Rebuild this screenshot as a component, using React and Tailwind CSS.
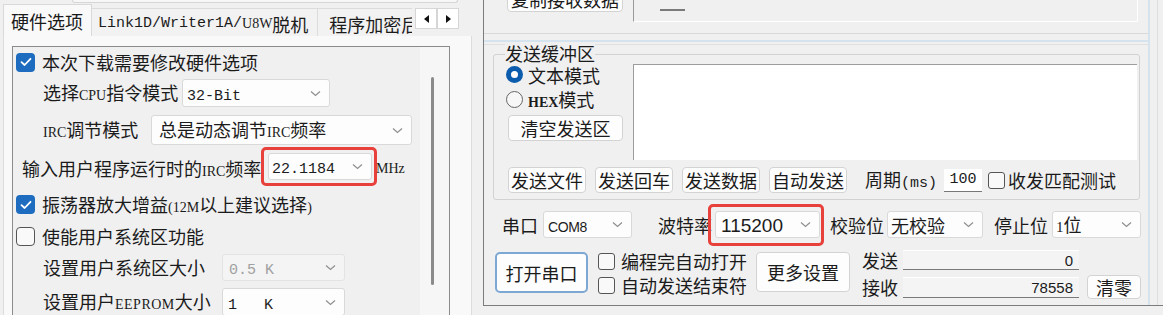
import clsx from 'clsx'

// small latin runs (serif / mono) mixed into CJK labels
function S({ children, className }) {
  return <span className={clsx("font-['Liberation_Serif',serif] text-[14px]", className)}>{children}</span>
}

function M({ children, className }) {
  return <span className={clsx("font-['Liberation_Mono',monospace] text-[15px]", className)}>{children}</span>
}

function Chevron() {
  return (
    <svg width="11" height="7" viewBox="0 0 11 7" className="shrink-0">
      <path d="M1 1.5 L5.5 5.5 L10 1.5" fill="none" stroke="#8f8f8f" strokeWidth="1.2" />
    </svg>
  )
}

function Select({ className, disabled, children }) {
  return (
    <div
      className={clsx(
        'flex shrink-0 items-center justify-between rounded-[3px] border pr-[8px]',
        className,
        disabled ? 'border-[#e3e3e3] bg-[#f4f4f4] text-[#a0a0a0]' : 'border-[#d9d9d9] bg-[#fdfdfd] text-[#1b1b1b]'
      )}
    >
      <span className="whitespace-pre leading-none">{children}</span>
      <Chevron />
    </div>
  )
}

function Check({ on, small }) {
  const size = small ? 'h-[17px] w-[17px] rounded-[3px]' : 'h-[19px] w-[19px] rounded-[4px]'
  if (on) {
    return (
      <div className={clsx(size, 'flex shrink-0 items-center justify-center bg-[#1d6cc0]')}>
        <svg width="12" height="10" viewBox="0 0 12 10">
          <path d="M1.5 5.2 L4.6 8 L10.5 1.8" fill="none" stroke="white" strokeWidth="1.8" strokeLinecap="round" strokeLinejoin="round" />
        </svg>
      </div>
    )
  }
  return <div className={clsx(size, 'shrink-0 border border-[#555] bg-[#f9f9f9]')} />
}

function Radio({ on }) {
  if (on) {
    return (
      <div className="flex h-[17px] w-[17px] shrink-0 items-center justify-center rounded-full bg-[#0c5cae]">
        <div className="h-[7px] w-[7px] rounded-full bg-white" />
      </div>
    )
  }
  return <div className="h-[17px] w-[17px] shrink-0 rounded-full border border-[#666] bg-[#f7f7f7]" />
}

function Btn({ className, children }) {
  return (
    <div className={clsx('flex shrink-0 items-center justify-center rounded-[4px] border bg-[#fdfdfd] leading-none', className || 'border-[#d3d3d3]')}>
      {children}
    </div>
  )
}

function Btn2({ className, children }) {
  return <Btn className={clsx('border-[#d3d3d3]', className)}>{children}</Btn>
}

function TabArrow({ left }) {
  return (
    <div className="flex h-[21px] w-[22px] items-center justify-center border border-[#d6d6d6] bg-white">
      <svg width="5" height="8" viewBox="0 0 5 8">
        <path d={left ? 'M5 0 L0 4 L5 8 Z' : 'M0 0 L5 4 L0 8 Z'} fill="#111" />
      </svg>
    </div>
  )
}

function LeftPane() {
  return (
    <div className="flex h-[315px] w-[483px] shrink-0 flex-col">
      <div className="h-[4px]">
        <div className="ml-[72px] h-[3px] w-[386px] rounded-b-[3px] border-x border-b border-[#d6d6d6] bg-[#f7f7f7]" />
      </div>

      {/* tabs */}
      <div className="flex h-[32px] items-end">
        <div className="flex w-[412px] items-end overflow-hidden">
          <div className="ml-[3px] flex h-[32px] shrink-0 items-center border-x border-t border-[#d9d9d9] bg-[#f9f9f9] pl-[7px] pr-[8px]">
            硬件选项
          </div>
          <div className="flex h-[28px] shrink-0 items-center whitespace-nowrap border-r border-t border-[#dcdcdc] bg-[#f2f2f2] pl-[6px] pr-[9px] pt-[2px]">
            <M>Link1D/Writer1A/</M>
            <S className="text-[12px]">U8W</S>
            脱机
          </div>
          <div className="flex h-[28px] shrink-0 items-center whitespace-nowrap border-t border-[#dcdcdc] bg-[#f2f2f2] pl-[11px] pt-[2px]">
            程序加密后下载
          </div>
        </div>
        <div className="mb-[7px] ml-[3px] flex self-end">
          <TabArrow left />
          <TabArrow />
        </div>
      </div>

      {/* tab page */}
      <div className="ml-[3px] w-[469px] flex-1 overflow-hidden border-x border-[#dcdcdc] bg-[#f9f9f9] pl-[8px] pt-[10px]">
        <div className="flex h-[290px] w-[438px] border-x border-t border-[#8b8b8b] bg-[#f0f0f0]">
          <div className="flex w-[407px] flex-col">
            <div className="flex h-[30px] items-center pl-[3px]">
              <Check on />
              <span className="ml-[7px]">本次下载需要修改硬件选项</span>
            </div>
            <div className="flex h-[32px] items-center pl-[30px]">
              <span className="w-[139px] shrink-0 whitespace-nowrap">选择<S>CPU</S>指令模式</span>
              <Select className="h-[28px] w-[148px] pl-[4px]"><M>32-Bit</M></Select>
            </div>
            <div className="flex h-[42px] items-center pl-[30px]">
              <span className="w-[108px] shrink-0 whitespace-nowrap"><S>IRC</S>调节模式</span>
              <Select className="h-[30px] w-[261px] pl-[7px]">总是动态调节<S>IRC</S>频率</Select>
            </div>
            <div className="flex h-[36px] items-center pl-[9px]">
              <span className="w-[239px] shrink-0 whitespace-nowrap">输入用户程序运行时的<S>IRC</S>频率</span>
              <div className="mb-[6px] flex h-[39px] w-[116px] shrink-0 items-center rounded-[5px] border-[3px] border-[#e8403b] pl-[4px]">
                <Select className="h-[27px] w-[104px] pl-[3px]"><M>22.1184</M></Select>
              </div>
              <S className="-ml-[1px]">MHz</S>
            </div>
            <div className="flex h-[35px] items-center pl-[3px]">
              <Check on />
              <span className="ml-[7px] whitespace-nowrap">振荡器放大增益<S>(12M</S>以上建议选择<S>)</S></span>
            </div>
            <div className="flex h-[28px] items-center pl-[3px]">
              <Check />
              <span className="ml-[7px]">使能用户系统区功能</span>
            </div>
            <div className="flex h-[34px] items-center pl-[30px]">
              <span className="w-[179px] shrink-0">设置用户系统区大小</span>
              <Select disabled className="h-[27px] w-[123px] pl-[6px]"><M>0.5 K</M></Select>
            </div>
            <div className="flex h-[36px] items-center pl-[30px]">
              <span className="w-[179px] shrink-0 whitespace-nowrap">设置用户<S className="tracking-[0.5px]">EEPROM</S>大小</span>
              <Select className="h-[28px] w-[123px] pl-[5px]"><M>1   K</M></Select>
            </div>
          </div>
          {/* scrollbar */}
          <div className="w-[29px] bg-[#f6f6f6] pt-[30px]">
            <div className="ml-[11px] h-[208px] w-[3px] rounded-full bg-[#8a8a8a]" />
          </div>
        </div>
      </div>
    </div>
  )
}

function RightPane() {
  return (
    <div className="flex h-[306px] w-[680px] shrink-0 border-b border-l border-[#7c7c7c]">
      <div className="flex w-[664px] flex-col">
        {/* receive area bottom */}
        <div className="flex h-[34px] items-start overflow-hidden border-b border-[#d8d8d8]">
          <Btn2 className="-mt-[14px] ml-[23px] h-[26px] w-[116px]">复制接收数据</Btn2>
          <div className="ml-[10px] h-[22px] w-[505px] border-b border-l border-r border-b-white border-l-[#9a9a9a] border-r-white">
            <div className="ml-[26px] mt-[9px] h-[2px] w-[25px] bg-[#7a7a7a]" />
          </div>
        </div>

        {/* splitter */}
        <div className="h-[10px] pt-[6px]">
          <div className="h-[2px] bg-[#d5e3ef]" />
        </div>

        <div className="flex flex-1 flex-col border-t border-[#e0e0e0]">
          {/* send buffer group */}
          <div className="relative ml-[9px] mt-[9px] flex h-[146px] w-[647px] shrink-0 flex-col rounded-[3px] border border-[#d2d2d2]">
            <span className="absolute -top-[11px] left-[11px] bg-[#f0f0f0] leading-none">发送缓冲区</span>
            <div className="flex">
              <div className="flex w-[139px] shrink-0 flex-col pt-[7px]">
                <div className="flex h-[25px] items-center pl-[12px]">
                  <Radio on />
                  <span className="ml-[5px] leading-none">文本模式</span>
                </div>
                <div className="flex h-[25px] items-center pl-[12px]">
                  <Radio />
                  <span className="ml-[5px] whitespace-nowrap leading-none"><S className="text-[12px] font-bold">HEX</S>模式</span>
                </div>
                <Btn2 className="ml-[14px] mt-[3px] h-[26px] w-[115px]">清空发送区</Btn2>
              </div>
              <div className="mt-[9px] h-[96px] w-[504px] border-l border-t border-[#9d9d9d] bg-white" />
            </div>
            <div className="mt-[7px] flex h-[26px] items-center pl-[14px]">
              <Btn2 className="h-[26px] w-[78px]">发送文件</Btn2>
              <Btn2 className="ml-[9px] h-[26px] w-[78px]">发送回车</Btn2>
              <Btn2 className="ml-[9px] h-[26px] w-[78px]">发送数据</Btn2>
              <Btn2 className="ml-[9px] h-[26px] w-[78px]">自动发送</Btn2>
              <span className="ml-[18px] whitespace-nowrap leading-none">周期<M className="text-[14px]">(ms)</M></span>
              <div className="ml-[7px] flex h-[23px] w-[38px] items-center justify-center border-b border-[#777] bg-white">
                <M className="text-[14px]">100</M>
              </div>
              <div className="ml-[6px]"><Check small /></div>
              <span className="ml-[3px] leading-none">收发匹配测试</span>
            </div>
          </div>

          {/* port settings */}
          <div className="flex h-[49px] items-center pl-[18px]">
            <span className="leading-none">串口</span>
            <Select className="ml-[5px] h-[27px] w-[89px] pl-[4px]">
              <span className="font-['Liberation_Sans',sans-serif] text-[14px] tracking-tight">COM8</span>
            </Select>
            <span className="ml-[26px] leading-none">波特率</span>
            <div className="-ml-[4px] flex h-[42px] w-[116px] shrink-0 items-center rounded-[5px] border-[3px] border-[#e8403b] pl-[4px]">
              <Select className="h-[27px] w-[105px] pl-[5px]">
                <span className="font-['Liberation_Sans',sans-serif] text-[19px]">115200</span>
              </Select>
            </div>
            <span className="ml-[6px] leading-none">校验位</span>
            <Select className="ml-[3px] h-[27px] w-[96px] pl-[3px]">无校验</Select>
            <span className="ml-[11px] leading-none">停止位</span>
            <Select className="ml-[4px] h-[27px] w-[89px] pl-[3px]"><S className="text-[15px]">1</S>位</Select>
          </div>

          <div className="flex h-[49px] items-start pl-[11px]">
            <Btn className="mt-[3px] h-[41px] w-[93px] rounded-[5px] border-2 border-[#7ea8d4]">打开串口</Btn>
            <div className="ml-[10px] flex flex-col">
              <div className="flex h-[24px] items-center">
                <Check small />
                <span className="ml-[6px] leading-none">编程完自动打开</span>
              </div>
              <div className="flex h-[24px] items-center">
                <Check small />
                <span className="ml-[6px] leading-none">自动发送结束符</span>
              </div>
            </div>
            <Btn2 className="ml-[9px] mt-[3px] h-[40px] w-[94px]">更多设置</Btn2>
            <div className="ml-[12px] flex flex-col">
              <div className="flex h-[22px] items-center">
                <span className="w-[41px] leading-none">发送</span>
                <div className="flex h-[20px] w-[176px] items-center justify-end border-b border-t border-b-[#7a7a7a] border-t-white bg-[#f4f4f4] pr-[6px] font-['Liberation_Sans',sans-serif] text-[15px]">0</div>
              </div>
              <div className="mt-[4px] flex h-[24px] items-center">
                <span className="w-[41px] leading-none">接收</span>
                <div className="flex h-[21px] w-[176px] items-center justify-end border-b border-t border-b-[#7a7a7a] border-t-white bg-[#f4f4f4] pr-[6px] font-['Liberation_Sans',sans-serif] text-[15px]">78558</div>
                <Btn2 className="ml-[8px] h-[24px] w-[54px]">清零</Btn2>
              </div>
            </div>
          </div>
        </div>
      </div>

      {/* right edge */}
      <div className="flex w-[15px] border-l-2 border-[#d5e3ef]">
        <div className="ml-[7px] w-px bg-[#dedede]" />
      </div>
    </div>
  )
}

export default function App() {
  return (
    <div className="flex h-[315px] w-[1163px] overflow-hidden bg-[#f0f0f0] font-['Noto_Sans_CJK_SC',sans-serif] text-[18px] leading-none text-[#1b1b1b]">
      <LeftPane />
      <RightPane />
    </div>
  )
}
